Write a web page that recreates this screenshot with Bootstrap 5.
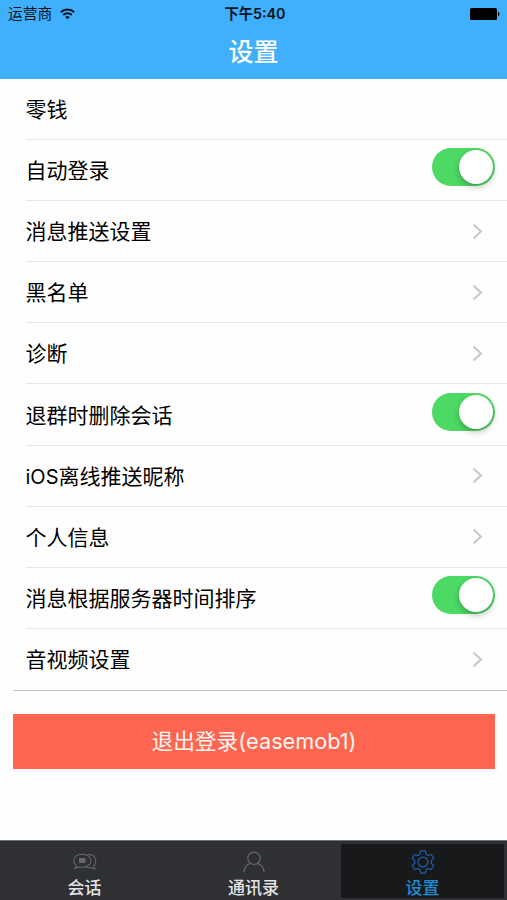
<!DOCTYPE html>
<html lang="zh-CN">
<head>
<meta charset="utf-8">
<meta name="viewport" content="width=device-width, initial-scale=1">
<title>设置</title>
<link href="https://cdn.jsdelivr.net/npm/bootstrap@5.3.0/dist/css/bootstrap.min.css" rel="stylesheet">
<style>
body{font-family:Inter,"Noto Sans CJK SC",sans-serif;color:#000;background:#fefefe;overflow:hidden}
.screen{height:900px}
.topbar{height:79px;background:#40b0fc}
.status{height:28px;font-size:14.7px;line-height:28px;padding:0 7px 0 8px;color:#06131c}
.status>div{flex:1 1 0}
.status .clock{font-size:14.3px;font-weight:600;padding-left:2px}
.page-title{font-size:25px;line-height:48px;font-weight:500}
.settings{padding-left:26px}
.settings .list-group-item{height:61.1px;padding:0 12px 0 0;border:0;border-bottom:1px solid #e6e6e6;background:transparent;color:#000;font-size:21px;line-height:30px}
.settings .list-group-item:last-child{border-bottom:0}
.settings .list-group-item>span{padding-top:2px;margin-left:-.5px}
.settings .latin{font-size:20px}
.list-end{height:1px;margin-left:13px;background:#c4c4c6}
.toggle{width:63px;height:38px;border-radius:19px;background:#4cd964;padding:2px;margin-top:-6px}
.knob{width:34px;height:34px;border-radius:50%;background:#fff;box-shadow:0 3px 6px rgba(0,0,0,.25)}
.chevron{margin-right:12px}
.logout{height:55px;margin:23px 12px 0 13px;background:#ff6650;color:#fff5f2;border-radius:0;border:0;font-size:21.7px;line-height:30px;padding:0}
.tabbar{height:60px;background:#2e3033;border-top:1px solid #6b7072;padding:3px 0 2px}
.tab{flex:0 0 169px;color:#e4e4e4;font-size:17px;line-height:20px;font-weight:500;text-decoration:none}
.tab svg{margin:6px 0 4px}
.tab.active{flex:1 1 0;background:#18191b;color:#1c8fd8;margin:0 3px}
</style>
</head>
<body>
<div class="screen d-flex flex-column">
  <header class="topbar">
    <div class="status d-flex align-items-center">
      <div class="d-flex align-items-center gap-2"><span>运营商</span>
        <svg width="15" height="12" viewBox="0 0 15 12" fill="none" stroke="#06131c" stroke-width="2"><path d="M.8 4.2a9.6 9.6 0 0 1 13.4 0M3.2 7a6.2 6.2 0 0 1 8.6 0"/><path d="M7.5 11.3 5.2 9a3.3 3.3 0 0 1 4.6 0Z" fill="#06131c" stroke="none"/></svg>
      </div>
      <div class="clock text-center">下午5:40</div>
      <div class="d-flex justify-content-end"><svg width="30" height="12" viewBox="0 0 30 12"><rect width="27" height="12" rx="1.5"/><path d="M28 3.500q3 2.500 0 5Z"/></svg></div>
    </div>
    <h1 class="page-title text-center text-white m-0">设置</h1>
  </header>
  <main class="flex-grow-1">
    <ul class="settings list-group list-group-flush">
      <li class="list-group-item d-flex align-items-center justify-content-between"><span>零钱</span></li>
      <li class="list-group-item d-flex align-items-center justify-content-between"><span>自动登录</span><div class="toggle d-flex justify-content-end"><div class="knob"></div></div></li>
      <li class="list-group-item d-flex align-items-center justify-content-between"><span>消息推送设置</span><svg class="chevron" width="11" height="17" viewBox="0 0 11 17" fill="none" stroke="#c7c7cc" stroke-width="2"><path d="m1.5 1.5 7.5 7-7.5 7"/></svg></li>
      <li class="list-group-item d-flex align-items-center justify-content-between"><span>黑名单</span><svg class="chevron" width="11" height="17" viewBox="0 0 11 17" fill="none" stroke="#c7c7cc" stroke-width="2"><path d="m1.5 1.5 7.5 7-7.5 7"/></svg></li>
      <li class="list-group-item d-flex align-items-center justify-content-between"><span>诊断</span><svg class="chevron" width="11" height="17" viewBox="0 0 11 17" fill="none" stroke="#c7c7cc" stroke-width="2"><path d="m1.5 1.5 7.5 7-7.5 7"/></svg></li>
      <li class="list-group-item d-flex align-items-center justify-content-between"><span>退群时删除会话</span><div class="toggle d-flex justify-content-end"><div class="knob"></div></div></li>
      <li class="list-group-item d-flex align-items-center justify-content-between"><span><span class="latin">iOS</span>离线推送昵称</span><svg class="chevron" width="11" height="17" viewBox="0 0 11 17" fill="none" stroke="#c7c7cc" stroke-width="2"><path d="m1.5 1.5 7.5 7-7.5 7"/></svg></li>
      <li class="list-group-item d-flex align-items-center justify-content-between"><span>个人信息</span><svg class="chevron" width="11" height="17" viewBox="0 0 11 17" fill="none" stroke="#c7c7cc" stroke-width="2"><path d="m1.5 1.5 7.5 7-7.5 7"/></svg></li>
      <li class="list-group-item d-flex align-items-center justify-content-between"><span>消息根据服务器时间排序</span><div class="toggle d-flex justify-content-end"><div class="knob"></div></div></li>
      <li class="list-group-item d-flex align-items-center justify-content-between"><span>音视频设置</span><svg class="chevron" width="11" height="17" viewBox="0 0 11 17" fill="none" stroke="#c7c7cc" stroke-width="2"><path d="m1.5 1.5 7.5 7-7.5 7"/></svg></li>
    </ul>
    <div class="list-end"></div>
    <div class="d-grid"><button type="button" class="btn logout">退出登录(easemob1)</button></div>
  </main>
  <nav class="tabbar d-flex">
    <a href="#" class="tab d-flex flex-column align-items-center"><svg width="26" height="26" viewBox="0 0 26 26" fill="none" stroke="#66686b" stroke-width="1.100"><path d="M4 17.500C-1.500 13 .5 4.500 9.800 4.500s12.500 8 7 12c-3 2.300-6.500 2.500-10 1.800-1.500 1-3 1.700-5.300 1.700Q3.500 19 4 17.500Z"/><path d="M16.500 5c8-.5 10.500 8 5.500 12.500q.5 2 2.500 3-3 0-5-1.500c-2.200.6-4 .4-6-.5"/><path d="M7 9.200h6v4.300H7z" fill="#66686b"/></svg>会话</a>
    <a href="#" class="tab d-flex flex-column align-items-center"><svg width="26" height="26" viewBox="0 0 26 26" fill="none" stroke="#66686b" stroke-width="1.300"><circle cx="13" cy="9" r="6.700"/><path d="M2 24c.5-5 3.500-8.500 7.500-9.500M16.500 14.500c4 1 7 4.500 7.500 9.500"/></svg>通讯录</a>
    <a href="#" class="tab active d-flex flex-column align-items-center"><svg width="26" height="26" viewBox="-13 -13 26 26" fill="none" stroke="#1e5fb0" stroke-width="1.300" stroke-linejoin="round"><circle r="5.300"/><path d="M-3.400-8.200-2.500-12h5l.9 3.800q1 .3 2 1.160l3.740-1.130 2.500 4.340-2.840 2.670q.3 1.160 0 2.320l2.840 2.670-2.500 4.340L5.400 7.040q-1 .86-2 1.160L2.500 12h-5l-.9-3.800q-1-.3-2-1.160l-3.740 1.130-2.500-4.340 2.840-2.670q-.3-1.160 0-2.320l-2.840-2.670 2.500-4.340 3.740 1.130q1-.86 2-1.160Z"/></svg>设置</a>
  </nav>
</div>
<script src="https://cdn.jsdelivr.net/npm/bootstrap@5.3.0/dist/js/bootstrap.bundle.min.js"></script>
</body>
</html>
